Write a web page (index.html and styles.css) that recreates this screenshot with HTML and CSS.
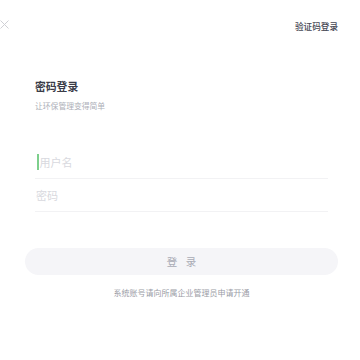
FILE: index.html
```html
<!DOCTYPE html>
<html lang="zh-CN">
<head>
<meta charset="utf-8">
<title>密码登录</title>
<link rel="stylesheet" href="styles.css">
</head>
<body>
<header class="top">
  <svg class="close" width="10" height="10" viewBox="0 0 10 10"><path d="M0.5 0.5 L8.5 8.5 M0.5 8.5 L8.5 0.5" stroke="#cfd0d5" stroke-width="1" fill="none"/></svg>
  <a class="switch">验证码登录</a>
</header>
<main class="form">
  <h1 class="title">密码登录</h1>
  <p class="sub">让环保管理变得简单</p>
  <div class="field"><span class="caret"></span><span class="ph">用户名</span></div>
  <div class="field"><span class="ph">密码</span></div>
</main>
<div class="actions">
  <button class="login">登 录</button>
  <p class="note">系统账号请向所属企业管理员申请开通</p>
</div>
</body>
</html>
```
FILE: styles.css
```css
* { box-sizing: border-box; }
html, body { margin: 0; padding: 0; background: #fff; }
body {
  width: 360px;
  height: 360px;
  overflow: hidden;
  font-family: "Noto Sans CJK SC", "Noto Sans", sans-serif;
}
.top {
  display: flex;
  justify-content: space-between;
  align-items: flex-start;
  padding: 0 22px 0 0;
  height: 31px;
}
.close { margin-top: 19.5px; display: block; }
.switch {
  margin-top: 22px;
  font-size: 8.6px;
  line-height: 9px;
  font-weight: 500;
  color: #454754;
}
.form { padding: 0 32px 0 35px; }
.title {
  margin: 50px 0 0;
  font-size: 10.8px;
  line-height: 11px;
  font-weight: 700;
  color: #3a3c48;
}
.sub {
  margin: 10px 0 0;
  font-size: 7.8px;
  line-height: 8px;
  color: #adafb8;
}
.field {
  display: flex;
  align-items: center;
  height: 33px;
  border-bottom: 1px solid #f2f2f4;
}
.sub + .field { margin-top: 36px; }
.caret {
  width: 2px;
  height: 16px;
  background: #7dcf8c;
  margin-left: 1.5px;
}
.ph {
  font-size: 11px;
  line-height: 11px;
  color: #d8d9de;
  padding-left: 1px;
}
.actions { padding: 0 22px 0 25px; }
.login {
  display: block;
  width: 100%;
  height: 27px;
  margin-top: 36px;
  border: none;
  border-radius: 14px;
  background: #f5f5f8;
  color: #a9abb5;
  font-family: inherit;
  font-size: 10.5px;
  letter-spacing: 3px;
  padding: 0 0 0 3px;
}
.note {
  margin: 14px 0 0;
  text-align: center;
  font-size: 8px;
  line-height: 8px;
  color: #9a9ca6;
}
```
